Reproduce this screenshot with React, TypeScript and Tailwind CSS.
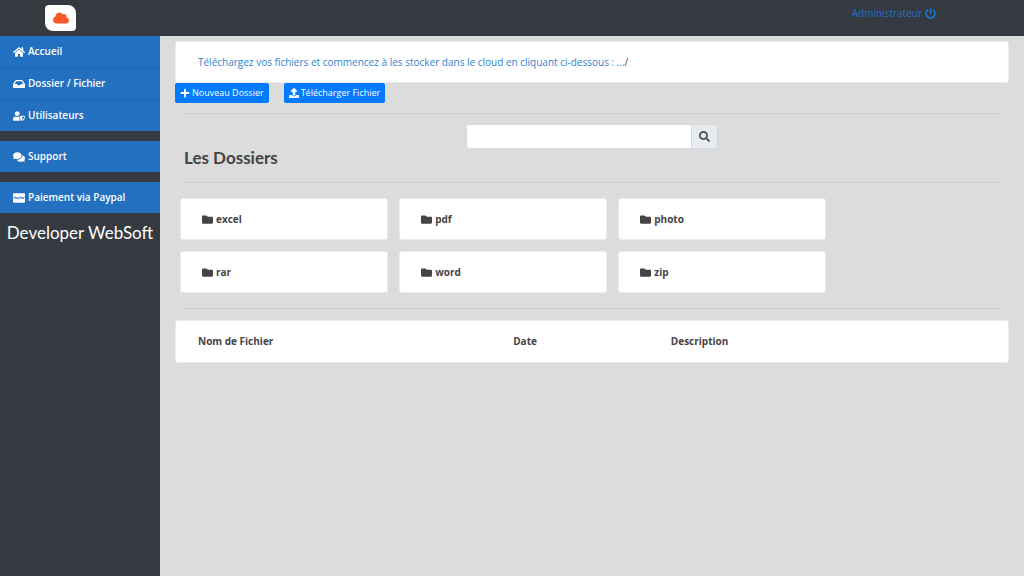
import {
  FaCcPaypal,
  FaCloud,
  FaComments,
  FaFolder,
  FaHome,
  FaInbox,
  FaPlus,
  FaPowerOff,
  FaSearch,
  FaUpload,
  FaUserShield,
} from 'react-icons/fa';
import type { IconType } from 'react-icons';

interface MenuItem {
  label: string;
  icon: IconType;
}

const menuGroups: MenuItem[][] = [
  [
    { label: 'Accueil', icon: FaHome },
    { label: 'Dossier / Fichier', icon: FaInbox },
    { label: 'Utilisateurs', icon: FaUserShield },
  ],
  [{ label: 'Support', icon: FaComments }],
  [{ label: 'Paiement via Paypal', icon: FaCcPaypal }],
];

const folders = ['excel', 'pdf', 'photo', 'rar', 'word', 'zip'];

const Header = () => (
  <header className="flex h-9 items-start justify-between bg-[#343a40]">
    <a
      href="#"
      aria-label="Accueil"
      className="mt-[5px] ml-[45px] flex h-[26px] w-[31px] items-center justify-center rounded-tl-sm rounded-tr-lg rounded-br-sm rounded-bl-lg bg-white text-[#fb5a28]"
    >
      <FaCloud className="h-4 w-4" />
    </a>
    <a href="#" className="mt-1 mr-[88px] flex items-center gap-[3px] leading-[18px] text-[#2270c0]">
      Administrateur <FaPowerOff className="h-[11px] w-[11px]" />
    </a>
  </header>
);

const Sidebar = () => (
  <aside className="w-40 shrink-0 bg-[#343a40]">
    <nav className="flex flex-col gap-[10px]">
      {menuGroups.map((group) => (
        <ul key={group[0].label}>
          {group.map(({ label, icon: Icon }) => (
            <li key={label} className="border-b border-[#1f64ae] last:border-b-0">
              <a
                href="#"
                className="flex h-[31px] items-center gap-[3px] bg-[#236fc0] pl-[13px] font-semibold text-white"
              >
                <Icon className="h-3 w-auto" /> {label}
              </a>
            </li>
          ))}
        </ul>
      ))}
    </nav>
    <h2 className="mt-2 text-center font-[Lato,sans-serif] text-[17px] leading-6 text-white">
      Developer WebSoft
    </h2>
  </aside>
);

const FolderCard = ({ name }: { name: string }) => (
  <a
    href="#"
    className="flex h-[42px] items-center gap-[3px] rounded-[3px] border border-[#ececec] bg-white pl-[21px] font-bold"
  >
    <FaFolder className="h-[11px] w-[11px]" /> {name}
  </a>
);

const Divider = () => <hr className="mx-[9px] border-[#cccccc]" />;

const App = () => {
  return (
    <div className="flex min-h-screen flex-col bg-[#dcdcdc] font-['Open_Sans',sans-serif] text-[10px] text-[#444444]">
      <Header />
      <div className="flex grow">
        <Sidebar />
        <main className="min-w-0 grow px-[15px] pt-[5px]">
          <p className="flex h-[42px] items-center rounded-[3px] border border-[#ececec] bg-white px-[22px]">
            <a href="#" className="text-[#2f83cf]">
              Téléchargez vos fichiers et commencez à les stocker dans le cloud en cliquant ci-dessous : ...
            </a>
            /
          </p>
          <div className="flex gap-[15px]">
            <button className="flex h-5 items-center gap-[2px] rounded-xs bg-[#007bff] px-[5px] text-[9px] text-white">
              <FaPlus className="h-[10px] w-[10px]" /> Nouveau Dossier
            </button>
            <button className="flex h-5 items-center gap-[2px] rounded-xs bg-[#007bff] px-[5px] text-[9px] text-white">
              <FaUpload className="h-[10px] w-[10px]" /> Télécharger Fichier
            </button>
          </div>

          <div className="pt-[10px]">
            <Divider />
          </div>
          <form className="mx-auto mt-[10px] flex h-[25px] w-[252px]">
            <input
              type="text"
              aria-label="Rechercher"
              className="min-w-0 grow rounded-l-[3px] border border-[#d3dae1] bg-white px-2 outline-none"
            />
            <button
              type="button"
              aria-label="Lancer la recherche"
              className="flex w-[26px] items-center justify-center rounded-r-[3px] border border-l-0 border-[#d3dae1] bg-[#e9ecef] text-[#495057]"
            >
              <FaSearch className="h-[11px] w-[11px]" />
            </button>
          </form>
          <h1 className="mb-[15px] ml-[9px] font-[Lato,sans-serif] text-[17px] leading-[18px] font-bold">
            Les Dossiers
          </h1>
          <Divider />

          <div className="mt-[15px] mb-[15px] ml-[5px] grid w-[77.5%] grid-cols-3 gap-[11px]">
            {folders.map((name) => (
              <FolderCard key={name} name={name} />
            ))}
          </div>
          <Divider />

          <div className="mt-[11px] rounded-[3px] border border-[#ececec] bg-white px-[22px]">
            <table className="w-full table-fixed text-left">
              <thead>
                <tr className="h-[41px]">
                  <th className="w-2/5 font-bold">Nom de Fichier</th>
                  <th className="w-1/5 font-bold">Date</th>
                  <th className="w-2/5 font-bold">Description</th>
                </tr>
              </thead>
            </table>
          </div>
        </main>
      </div>
    </div>
  );
};

export default App;
